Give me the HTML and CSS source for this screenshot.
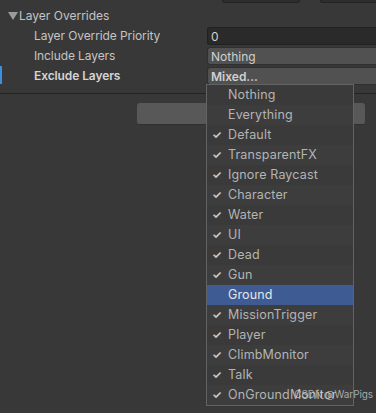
FILE: index.html
```html
<!DOCTYPE html>
<html lang="en">
<head>
  <meta charset="UTF-8" />
  <title>Layer Overrides</title>
  <link rel="stylesheet" href="styles.css">
</head>
<body>

  <div class="top-fields">
    <div class="stub stub-a"></div>
    <div class="stub stub-b"></div>
  </div>

  <div class="foldout">
    <svg class="arrow" width="10" height="8" viewBox="0 0 10 8"><polygon points="0,0 10,0 5,8" fill="#9b9b9b"/></svg>
    <span>Layer Overrides</span>
  </div>

  <div class="row">
    <div class="label">Layer Override Priority</div>
    <div class="field field-text">0</div>
  </div>
  <div class="row">
    <div class="label">Include Layers</div>
    <div class="field">Nothing</div>
  </div>
  <div class="row active">
    <div class="label bold">Exclude Layers</div>
    <div class="field bold">Mixed...</div>
  </div>

  <div class="separator"></div>
  <div class="button-row">
    <div class="button"></div>
  </div>

  <ul class="menu">
    <li>Nothing</li>
    <li>Everything</li>
    <li class="on">Default</li>
    <li class="on">TransparentFX</li>
    <li class="on">Ignore Raycast</li>
    <li class="on">Character</li>
    <li class="on">Water</li>
    <li class="on">UI</li>
    <li class="on">Dead</li>
    <li class="on">Gun</li>
    <li class="hover">Ground</li>
    <li class="on">MissionTrigger</li>
    <li class="on">Player</li>
    <li class="on">ClimbMonitor</li>
    <li class="on">Talk</li>
    <li class="on">OnGroundMonitor</li>
  </ul>

  <div class="watermark">CSDN @WarPigs</div>

</body>
</html>
```

FILE: styles.css
```css
body { margin: 0; background: #383838; font-family: Inter, "Noto Sans", sans-serif; font-size: 12px; color: #c4c4c4; width: 376px; height: 413px; overflow: hidden; position: relative; }
.top-fields { display: flex; height: 3px; }
.stub { height: 3px; background: #2d2d2d; border: 1px solid #232323; border-top: none; border-radius: 0 0 3px 3px; box-sizing: border-box; }
.stub-a { margin-left: 222px; width: 78px; }
.stub-b { margin-left: 20px; flex: 1; border-right: none; border-radius: 0 0 0 3px; }
.foldout { display: flex; align-items: center; height: 20px; margin-top: 2px; padding-left: 8px; }
.arrow { margin-right: 1px; margin-top: 1px; }
.row { display: flex; align-items: center; height: 20px; position: relative; }
.label { width: 173px; padding-left: 34px; letter-spacing: -0.1px; }
.bold { font-weight: 600; color: #d4d4d4; }
.active::before { content: ""; position: absolute; left: 0; top: 1px; width: 2px; height: 18px; background: #3a8ee6; }
.field { flex: 1; height: 18px; line-height: 17px; margin-top: 1px; padding-left: 3px; background: #515151; border: 1px solid #303030; border-right: none; border-radius: 3px 0 0 3px; box-sizing: border-box; color: #d0d0d0; }
.field-text { background: #2a2a2a; border-color: #212121; color: #d2d2d2; }
.separator { height: 1px; background: #232323; margin-top: 8px; }
.button-row { display: flex; padding: 9px 11px 0 137px; }
.button { flex: 1; height: 22px; background: #585858; border-radius: 3px; border-bottom: 1px solid #2f2f2f; box-sizing: border-box; }
.menu { position: absolute; left: 206px; top: 84px; width: 148px; margin: 0; padding: 0; list-style: none; background: #3a3a3a; border: 1px solid #636363; box-sizing: border-box; }
.menu li { height: 20px; line-height: 20px; padding-left: 21px; font-size: 12.5px; letter-spacing: 0.15px; color: #b4b4b4; position: relative; }
.menu li:nth-child(even) { background: #3d3d3d; }
.menu li.on::before { content: "✓"; position: absolute; left: 5px; top: 0; font-size: 11px; font-weight: 700; color: #c8c8c8; }
.menu li.hover { background: #3e5c93; color: #e6e6e6; }
.watermark { position: absolute; right: 3px; top: 388px; font-size: 10px; letter-spacing: -0.1px; white-space: nowrap; color: rgba(220, 220, 220, 0.7); }
```
